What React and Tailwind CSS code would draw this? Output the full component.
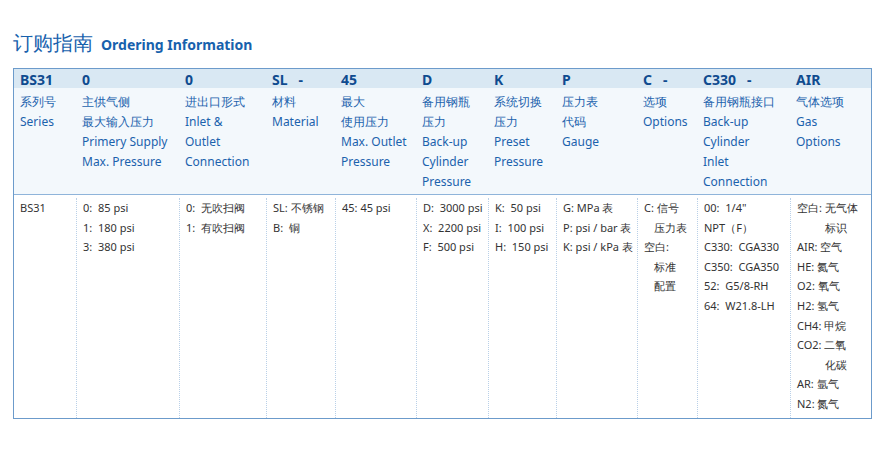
const cols = "grid-cols-[62px_103px_87px_69px_81px_72px_68px_81px_60px_93px_81px]"

const codes = ["BS31", "0", "0", "SL   -", "45", "D", "K", "P", "C   -", "C330   -", "AIR"]

const descs = [
  ["系列号", "Series"],
  ["主供气侧", "最大输入压力", "Primery Supply", "Max. Pressure"],
  ["进出口形式", "Inlet &", "Outlet", "Connection"],
  ["材料", "Material"],
  ["最大", "使用压力", "Max. Outlet", "Pressure"],
  ["备用钢瓶", "压力", "Back-up", "Cylinder", "Pressure"],
  ["系统切换", "压力", "Preset", "Pressure"],
  ["压力表", "代码", "Gauge"],
  ["选项", "Options"],
  ["备用钢瓶接口", "Back-up", "Cylinder", "Inlet", "Connection"],
  ["气体选项", "Gas", "Options"],
]

// [text, indent]
const body = [
  [["BS31"]],
  [["0:  85 psi"], ["1:  180 psi"], ["3:  380 psi"]],
  [["0:  无吹扫阀"], ["1:  有吹扫阀"]],
  [["SL: 不锈钢"], ["B:  铜"]],
  [["45: 45 psi"]],
  [["D:  3000 psi"], ["X:  2200 psi"], ["F:  500 psi"]],
  [["K:  50 psi"], ["I:  100 psi"], ["H:  150 psi"]],
  [["G: MPa 表"], ["P: psi / bar 表"], ["K: psi / kPa 表"]],
  [["C: 信号"], ["压力表", "pl-[10px]"], ["空白:"], ["标准", "pl-[10px]"], ["配置", "pl-[10px]"]],
  [["00:  1/4\""], ["NPT（F）"], ["C330:  CGA330"], ["C350:  CGA350"], ["52:  G5/8-RH"], ["64:  W21.8-LH"]],
  [["空白: 无气体"], ["标识", "pl-[28px]"], ["AIR: 空气"], ["HE: 氦气"], ["O2: 氧气"], ["H2: 氢气"], ["CH4: 甲烷"], ["CO2: 二氧"], ["化碳", "pl-[28px]"], ["AR: 氩气"], ["N2: 氮气"]],
]

export default function App() {
  return (
    <div className="w-[885px] h-[450px] bg-white [font-family:'Liberation_Sans','Noto_Sans_CJK_SC',sans-serif]">
      <div className="flex items-end gap-2 pl-[13px] pt-[26px] h-[53px]">
        <span className="text-[20px] leading-none text-[#1761ad] font-medium">订购指南</span>
        <span className="text-[14px] leading-none font-bold text-[#1761ad] pb-[1px]">Ordering Information</span>
      </div>
      <div className="ml-[13px] mt-[15px] w-[859px] border border-[#6c9bcb]">
        <div className={`grid ${cols} bg-[#d9e8f3] h-[19px] items-center`}>
          {codes.map((c, i) => (
            <div key={i} className="pl-[6px] text-[14px] font-bold text-[#0f4b8f] whitespace-pre">{c}</div>
          ))}
        </div>
        <div className={`grid ${cols} bg-[#f3f8fc] pt-[4px] pb-[2px] border-b border-[#8fb4da]`}>
          {descs.map((d, i) => (
            <div key={i} className="pl-[6px] text-[12px] leading-[20px] text-[#1b62ad]">
              {d.map((t) => <div key={t}>{t}</div>)}
            </div>
          ))}
        </div>
        <div className={`grid ${cols} h-[223px] pt-[3px]`}>
          {body.map((b, i) => (
            <div key={i} className={`pl-[6px] text-[11px] leading-[19.6px] text-[#333] ${i > 0 ? "border-l border-dotted border-[#b9d0e8]" : ""}`}>
              {b.map(([t, pad], j) => <div key={j} className={`whitespace-pre ${pad || ""}`}>{t}</div>)}
            </div>
          ))}
        </div>
      </div>
    </div>
  )
}
